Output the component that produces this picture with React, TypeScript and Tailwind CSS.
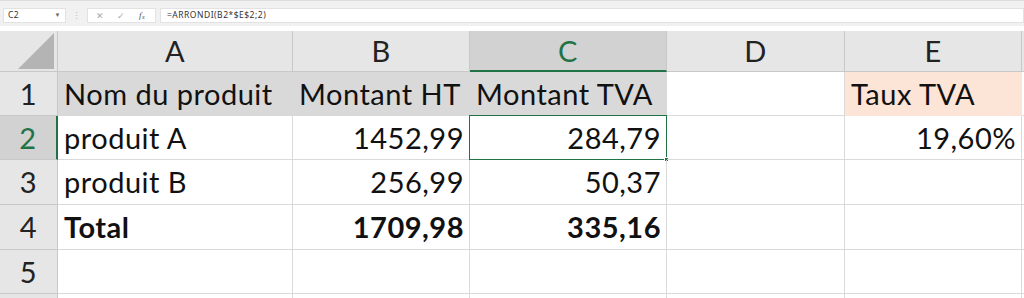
import React from 'react';

const GRID = 'border-[#dadada]';
const cols = ['A', 'B', 'C', 'D', 'E'];

type Cell = { text?: string; align?: 'left' | 'right'; bold?: boolean; fill?: string; selected?: boolean };

const rows: Cell[][] = [
  [
    { text: 'Nom du produit', fill: 'bg-[#d9d9d9] border-[#d9d9d9]' },
    { text: 'Montant HT', fill: 'bg-[#d9d9d9] border-[#d9d9d9]' },
    { text: 'Montant TVA', fill: 'bg-[#d9d9d9] border-[#d9d9d9]' },
    {},
    { text: 'Taux TVA', fill: 'bg-[#fce4d6] border-[#fce4d6]' },
  ],
  [
    { text: 'produit A' },
    { text: '1452,99', align: 'right' },
    { text: '284,79', align: 'right', selected: true },
    {},
    { text: '19,60%', align: 'right' },
  ],
  [{ text: 'produit B' }, { text: '256,99', align: 'right' }, { text: '50,37', align: 'right' }, {}, {}],
  [
    { text: 'Total', bold: true },
    { text: '1709,98', align: 'right', bold: true },
    { text: '335,16', align: 'right', bold: true },
    {},
    {},
  ],
  [{}, {}, {}, {}, {}],
];

const rowHeights = ['h-[44px]', 'h-[44px]', 'h-[45px]', 'h-[45px]', 'h-[44px]'];

function FormulaBar() {
  return (
    <div className="h-[31px] bg-white">
      <div className="h-[26px] bg-[#f1f1f1] border-t border-[#dcdcdc] flex items-center pt-[4px] text-[8.5px] text-[#333] font-['Noto_Sans',sans-serif]">
        <div className="ml-[3px] w-[63px] h-[15px] bg-white border border-[#e2e2e2] flex items-center justify-between px-[4px]">
          <span>C2</span>
          <span className="text-[6px] text-[#666]">▼</span>
        </div>
        <div className="w-[21px] text-center text-[#bbb] text-[9px]">⋮</div>
        <div className="w-[69px] h-[15px] bg-white border border-[#e2e2e2] flex items-center text-[#aaa]">
          <span className="ml-[8px] text-[9px]">✕</span>
          <span className="ml-[12px] text-[9px]">✓</span>
          <span className="ml-[14px] italic font-['Liberation_Serif',serif] text-[9px] text-[#555]">f<sub className="text-[6px]">x</sub></span>
        </div>
        <div className="ml-[4px] flex-1 h-[15px] bg-white border border-[#e2e2e2] flex items-center px-[6px]">
          =ARRONDI(B2*$E$2;2)
        </div>
      </div>
    </div>
  );
}

export default function App() {
  return (
    <div className="w-[1024px] h-[298px] overflow-hidden bg-white font-['Lato',sans-serif] text-[29px] tracking-[0.5px] text-[#111]">
      <FormulaBar />
      <div className="grid grid-cols-[58px_235px_177px_197px_178px_177px_1fr]">
        {/* column headers */}
        <div className="h-[41px] bg-[#e6e6e6] border-r border-b border-[#c8c8c8] flex items-end justify-end pb-[2px] pr-[3px]">
          <svg width="36" height="36" viewBox="0 0 36 36">
            <polygon points="0,36 36,36 36,0" fill="#b4b4b4" />
          </svg>
        </div>
        {cols.map((c) => (
          <div
            key={c}
            className={
              c === 'C'
                ? 'h-[41px] bg-[#d2d2d2] border-b-2 border-[#217346] border-r border-r-[#c8c8c8] flex items-center justify-center text-[#217346]'
                : 'h-[41px] bg-[#e6e6e6] border-r border-b border-[#c8c8c8] flex items-center justify-center text-[#222]'
            }
          >
            {c}
          </div>
        ))}
        <div className="h-[41px] bg-[#e6e6e6] border-b border-[#c8c8c8]" />

        {rows.map((row, i) => (
          <React.Fragment key={i}>
            <div
              className={
                i === 1
                  ? `${rowHeights[i]} bg-[#d2d2d2] border-b border-[#c8c8c8] border-r-2 border-r-[#217346] flex items-center justify-center text-[#217346]`
                  : `${rowHeights[i]} bg-[#e6e6e6] border-b border-r border-[#c8c8c8] flex items-center justify-center text-[#222]`
              }
            >
              {i + 1}
            </div>
            {row.map((cell, j) => (
              <div
                key={j}
                className={`${rowHeights[i]} relative border-r border-b flex items-center px-[6px] whitespace-nowrap ${
                  cell.fill ?? GRID
                } ${cell.align === 'right' ? 'justify-end pr-[5px]' : 'justify-start'} ${cell.bold ? 'font-bold' : ''}`}
              >
                {cell.text}
                {cell.selected && (
                  <>
                    <div className="absolute -left-px -top-px -right-px -bottom-px border-[1.5px] border-[#217346]" />
                    <div className="absolute -right-[3px] -bottom-[3px] w-[5px] h-[5px] bg-[#217346] border border-white" />
                  </>
                )}
              </div>
            ))}
            <div className={`${rowHeights[i]} border-b ${GRID}`} />
          </React.Fragment>
        ))}
        <div className="h-[10px] bg-[#e6e6e6] border-r border-[#c8c8c8]" />
        {cols.map((c) => (
          <div key={c} className={`h-[10px] border-r ${GRID}`} />
        ))}
        <div className="h-[10px]" />
      </div>
    </div>
  );
}
